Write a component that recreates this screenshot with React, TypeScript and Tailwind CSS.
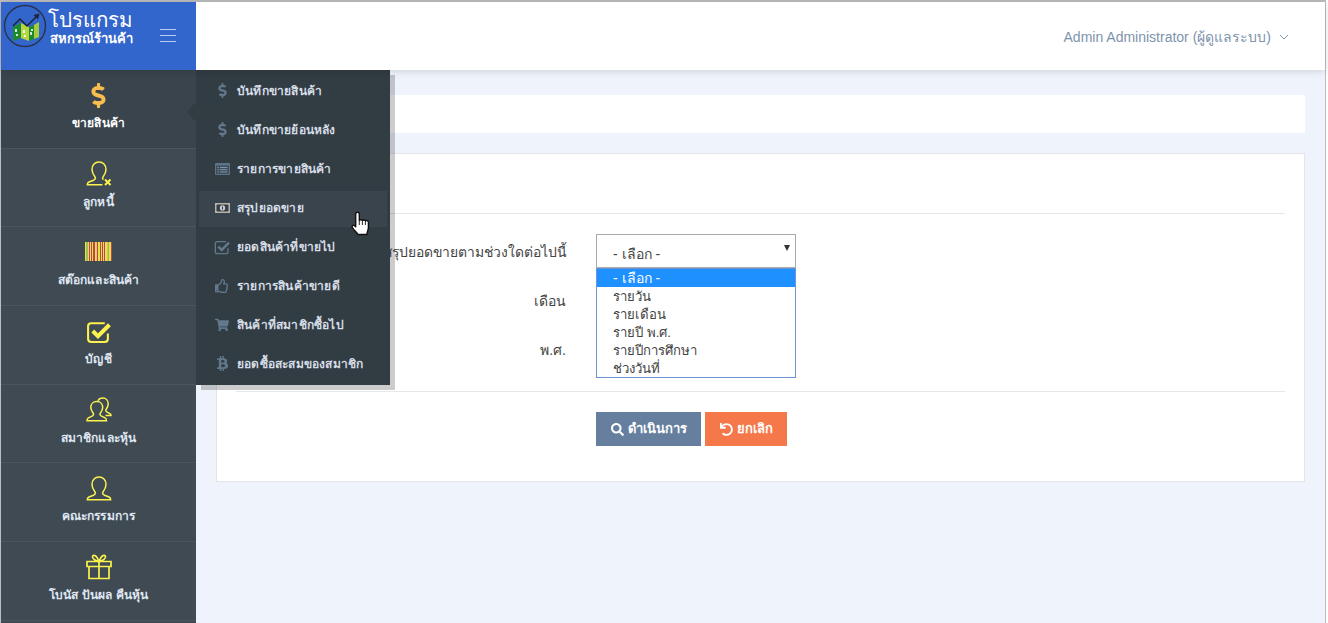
import type { ReactNode } from 'react';
import { FaDollarSign, FaRegThumbsUp, FaShoppingCart, FaBtc, FaSearch, FaUndo } from 'react-icons/fa';

const font = 'font-["Liberation_Sans","Noto_Sans",Tahoma,sans-serif]';

function UserOutline() {
  return (
    <svg width="26" height="25" viewBox="0 0 26 25" fill="none" stroke="#fbf24e" strokeWidth="1.500">
      <path d="M13 1C9 1 6 4 6 8.500c0 3.500 1.500 5.500 3 7.500 1 1.500 0 2.500-1.500 3.200L3 21c-1.500.700-1.700 1.500-1.700 2.700h23.400c0-1.200-.2-2-1.700-2.700l-4.500-1.800c-1.500-.7-2.500-1.700-1.500-3.200 1.500-2 3-4 3-7.500C20 4 17 1 13 1z" />
    </svg>
  );
}

function UserDebt() {
  return (
    <svg width="26" height="25" viewBox="0 0 26 25" fill="none" stroke="#fbf24e" strokeWidth="1.500">
      <path d="M16.500 23.700H1.300c0-1.200.2-2 1.700-2.700l4.500-1.800C9 18.500 10 17.500 9 16c-1.500-2-3-4-3-7.500C6 4 9 1 13 1s7 3 7 7.500c0 3.500-1.500 5.500-3 7.500-.8 1.200-.4 2 .4 2.700" />
      <path d="M19 18.500l5.500 5.500M24.500 18.500L19 24" strokeWidth="1.900" />
    </svg>
  );
}

function UserPair() {
  return (
    <svg width="26" height="25" viewBox="0 0 26 25" fill="none" stroke="#fbf24e" strokeWidth="1.500">
      <path d="M10.500 4.500c-3.200 0-5.700 2.500-5.700 6 0 2.500 1.200 4.200 2.400 5.800.9 1.300 0 2.200-1.200 2.800l-3.600 1.700C1.200 21.500 1 22.300 1 23.700h19.500c0-1.400-.2-2.200-1.400-2.900l-3.600-1.700c-1.200-.6-2.100-1.500-1.200-2.800 1.200-1.600 2.400-3.300 2.400-5.800 0-3.500-2.500-6-5.700-6z" />
      <path d="M12 3.800C12.800 2 14.500 1 16.800 1c3.200 0 5.400 2.500 5.400 6 0 2.500-1 4-2.100 5.500-.8 1.100-.2 2 1 2.600l2.800 1.500c.8.500 1.100 1 1.100 2h-5.500" />
    </svg>
  );
}

function Barcode() {
  const stripes = ['#e8e04c', '#9cc04c', '#9cc04c', '#e8e04c', '#c0405c', '#e8e04c', '#c0405c', '#e8e04c', '#c0405c', '#c0405c', '#e8e04c', '#e0d050', '#c0405c', '#e8e04c', '#e8e04c', '#c0405c', '#e8e04c', '#c0405c', '#e8e04c', '#c0405c', '#e8e04c', '#e8e04c', '#c8d04c', '#9cc04c', '#e8e04c', '#e8e04c', '#c0405c'];
  return (
    <svg width="27" height="19" viewBox="0 0 27 19" className="mb-[2px]">
      {stripes.map((c, i) => (
        <rect key={i} x={i} y="0" width="1" height="19" fill={c} />
      ))}
    </svg>
  );
}

function CheckBox({ size, color, stroke }: { size: number; color: string; stroke: number }) {
  return (
    <svg width={size} height={size} viewBox="0 0 24 24" fill="none" stroke={color}>
      <path d="M21 14v5c0 1.700-1.300 3-3 3H5c-1.700 0-3-1.300-3-3V7c0-1.700 1.300-3 3-3h13" strokeWidth={stroke} />
      <path d="M6.500 11.500l5 5L22.500 5.500" strokeWidth={stroke * 1.900} />
    </svg>
  );
}

function Gift() {
  return (
    <svg width="26" height="26" viewBox="0 0 26 26" fill="none" stroke="#fbf24e" strokeWidth="1.700">
      <path d="M1 7.500h24v5H1zM3 12.500V24.500h20V12.500M13 7.500v17" />
      <path d="M13 7.500C10 7 6 5 6.500 2.500 7.500 0 11 1.500 13 7.500zM13 7.500C16 7 20 5 19.500 2.500 18.500 0 15 1.500 13 7.500z" />
    </svg>
  );
}

function ListAlt() {
  return (
    <svg width="15" height="12" viewBox="0 0 15 12">
      <rect x="0" y="0" width="15" height="12" rx="1" fill="#5d7488" />
      <rect x="1" y="2.500" width="13" height="8.500" fill="#3e4e5b" />
      <path d="M2.500 4.500h1.500M5 4.500h7.500M2.500 6.700h1.500M5 6.700h7.500M2.500 9h1.500M5 9h7.500" stroke="#7f95a8" strokeWidth="1" />
    </svg>
  );
}

function MoneyNote() {
  return (
    <svg width="15" height="10" viewBox="0 0 15 10">
      <rect x="0" y="0" width="15" height="10" fill="#b9b4a8" />
      <rect x="1.500" y="1.500" width="12" height="7" rx="1" fill="#353f47" />
      <circle cx="7.500" cy="5" r="2.700" fill="#c7ccd0" />
      <rect x="7" y="3.500" width="1" height="3" fill="#353f47" />
    </svg>
  );
}

function Logo() {
  return (
    <svg width="46" height="46" viewBox="0 0 46 46" className="mt-[1px] shrink-0">
      <circle cx="23" cy="23" r="20.500" fill="#3366cc" stroke="#29324a" strokeWidth="1.400" />
      <path d="M11 24l8-4v15l-8 3z" fill="#1e8a30" />
      <path d="M19 20l8 4v14l-8-3z" fill="#b7d540" />
      <path d="M27 24l5-2v14l-5 2z" fill="#1e8a30" />
      <path d="M32 22l5-3v15l-5 2z" fill="#a6cc3e" />
      <path d="M11 23l7-7 7 7 10-10" fill="none" stroke="#1d2438" strokeWidth="1.500" />
      <path d="M31.500 12l6-1.500-1.500 6z" fill="#1d2438" />
      <path d="M14 26v3M15 31v2M22 27v3M23 32v2M29 29v3M30 26v2" stroke="#fff" strokeWidth="1.600" />
    </svg>
  );
}

function HandCursor() {
  return (
    <svg width="19" height="25" viewBox="0 0 19 25" className="absolute left-[351px] top-[211px]">
      <path d="M6.500 1.200c1.100 0 1.800.8 1.800 1.900V9.500c.6-1 2.700-1 3.100 0 .6-.8 2.500-.8 3 .3.700-.6 3-.3 3 1.500v5.200c0 2.500-1.400 3.500-1.400 7H6.800C6 21.500 3 19.500 1.300 16.200c-.7-1.400.9-2.600 2.200-1.500l1.200 1.100V3.100c0-1.100.7-1.900 1.800-1.900z" fill="#fff" stroke="#111" strokeWidth="1.400" strokeLinejoin="round" />
      <path d="M8.300 9.500v4.500M11.400 9.500v4.500M14.400 10v4" stroke="#111" strokeWidth="0.900" />
    </svg>
  );
}

const sideItems: { label: string; icon: ReactNode; active?: boolean }[] = [
  { label: 'ขายสินค้า', icon: <FaDollarSign className="text-[#f7bd4f] text-[25px]" />, active: true },
  { label: 'ลูกหนี้', icon: <UserDebt /> },
  { label: 'สต๊อกและสินค้า', icon: <Barcode /> },
  { label: 'บัญชี', icon: <CheckBox size={25} color="#fbf24e" stroke={2} /> },
  { label: 'สมาชิกและหุ้น', icon: <UserPair /> },
  { label: 'คณะกรรมการ', icon: <UserOutline /> },
  { label: 'โบนัส ปันผล คืนหุ้น', icon: <Gift /> },
];

const flyItems: { label: string; icon: ReactNode; hover?: boolean }[] = [
  { label: 'บันทึกขายสินค้า', icon: <FaDollarSign className="text-[15px]" /> },
  { label: 'บันทึกขายย้อนหลัง', icon: <FaDollarSign className="text-[15px]" /> },
  { label: 'รายการขายสินค้า', icon: <ListAlt /> },
  { label: 'สรุปยอดขาย', icon: <MoneyNote />, hover: true },
  { label: 'ยอดสินค้าที่ขายไป', icon: <CheckBox size={16} color="#62798c" stroke={2} /> },
  { label: 'รายการสินค้าขายดี', icon: <FaRegThumbsUp className="text-[14px]" /> },
  { label: 'สินค้าที่สมาชิกซื้อไป', icon: <FaShoppingCart className="text-[14px]" /> },
  { label: 'ยอดซื้อสะสมของสมาชิก', icon: <FaBtc className="text-[15px]" /> },
];

const options = ['- เลือก -', 'รายวัน', 'รายเดือน', 'รายปี พ.ศ.', 'รายปีการศึกษา', 'ช่วงวันที่'];

export default function App() {
  return (
    <div className={`${font} relative h-[623px] w-[1328px] overflow-hidden bg-white`}>
      <div className="flex h-[623px] w-[1326px] flex-col border-t-2 border-l border-r border-[#bdbdbd] bg-[#eff3fb]">
        {/* Header */}
        <header className="z-10 flex h-[68px] shrink-0 bg-white shadow-[0_1px_8px_rgba(0,0,0,0.15)]">
          <div className="flex w-[195px] items-start bg-[#3366cc] pl-[1px] text-white">
            <Logo />
            <div className="mt-[7px] leading-none">
              <div className="text-[20.500px] leading-[22px]">โปรแกรม</div>
              <div className="pl-[2px] text-[13px] font-bold leading-[15px]">สหกรณ์ร้านค้า</div>
            </div>
            <div className="ml-auto mr-[20px] mt-[27px] flex w-[16px] flex-col gap-[5px]">
              <span className="h-px bg-[#b8cdf0]" />
              <span className="h-px bg-[#b8cdf0]" />
              <span className="h-px bg-[#b8cdf0]" />
            </div>
          </div>
          <div className="ml-auto mr-[36px] mt-[25px] flex items-start gap-[8px] text-[14px] text-[#7d93ae]">
            <span>Admin Administrator (ผู้ดูแลระบบ)</span>
            <svg width="10" height="10" viewBox="0 0 10 10" className="mt-[5px]" fill="none" stroke="#7d93ae"><path d="M1 3l4 4 4-4" /></svg>
          </div>
        </header>

        <div className="flex min-h-0 flex-1">
          {/* Sidebar */}
          <aside className="flex w-[195px] shrink-0 flex-col bg-[#3f4a53]">
            {sideItems.map((item) => (
              <div
                key={item.label}
                className={`flex h-[78.700px] shrink-0 flex-col items-center border-b border-[#4a555e] pt-[10px] ${item.active ? 'bg-[#3a444c]' : ''}`}
              >
                <div className="flex h-[30px] items-center justify-center">{item.icon}</div>
                <div className={`mt-[4px] text-[12px] font-bold tracking-[0.15px] ${item.active ? 'text-white' : 'text-[#dfe7f2]'}`}>{item.label}</div>
              </div>
            ))}
          </aside>

          {/* Content */}
          <main className="flex-1 px-[20px] pt-[25px]">
            <div className="h-[38px] bg-white" />
            <section className="mt-[20px] h-[329px] border border-[#e3e5ea] bg-white px-[19px]">
              <div className="h-[60px] border-b border-[#e7e7e7]" />
              <div className="mt-[20px] grid grid-cols-[330px_200px] gap-x-[30px] text-[14px] text-[#444]">
                <label className="h-[34px] pt-[8px] text-right text-[13.900px]">เลือกสรุปยอดขายตามช่วงใดต่อไปนี้</label>
                <div className="relative h-[34px] border border-[#a9a9a9] bg-white pl-[16px] pt-[9px]">
                  - เลือก -
                  <span className="absolute right-[5px] top-[10px] h-0 w-0 border-x-[3.500px] border-t-[6px] border-x-transparent border-t-[#333]" />
                </div>
                <label className="mt-[15px] h-[34px] pt-[8px] text-right">เดือน</label>
                <div />
                <label className="mt-[15px] h-[34px] pt-[8px] text-right">พ.ศ.</label>
                <div />
              </div>
              <div className="mt-[25px] border-t border-[#e7e7e7]" />
              <div className="ml-[360px] mt-[20px] flex gap-[4px] text-[13px] font-bold text-white">
                <button className="flex h-[34px] w-[105px] items-center justify-center gap-[4px] bg-[#667f9f]"><FaSearch className="text-[13px]" />ดำเนินการ</button>
                <button className="flex h-[34px] w-[82px] items-center justify-center gap-[4px] bg-[#f5784a]"><FaUndo className="text-[13px]" />ยกเลิก</button>
              </div>
            </section>
          </main>
        </div>
      </div>

      {/* Flyout menu */}
      <div className="absolute left-[196px] top-[70px] h-[315px] w-[194px] bg-[#323c43] px-[3px] pt-[2px] shadow-[5px_5px_0_rgba(0,0,0,0.2)]">
        <span className="absolute left-[-9px] top-[32px] h-0 w-0 border-y-[10px] border-r-[9px] border-y-transparent border-r-[#323c43]" />
        {flyItems.map((item) => (
          <div key={item.label} className="flex h-[39px] items-center">
            <div className={`flex h-[36px] w-full items-center pb-[2px] text-[12px] font-bold tracking-[0.2px] text-[#d5dde6] ${item.hover ? 'bg-[#3a444c]' : ''}`}>
              <span className="flex w-[38px] shrink-0 justify-center pl-[11px] pr-[3px] text-[#62798c]">{item.icon}</span>
              <span className="whitespace-nowrap">{item.label}</span>
            </div>
          </div>
        ))}
      </div>

      {/* Open select list */}
      <ul className="absolute left-[596px] top-[268px] h-[110px] w-[200px] border border-[#6f94d4] bg-white text-[13.200px] text-[#444]">
        {options.map((o, i) => (
          <li key={o} className={`h-[18px] pl-[16px] ${i === 0 ? 'bg-[#1e90ff] text-[14px] leading-[18px] text-white' : 'leading-[20px]'}`}>{o}</li>
        ))}
      </ul>

      <HandCursor />
    </div>
  );
}
